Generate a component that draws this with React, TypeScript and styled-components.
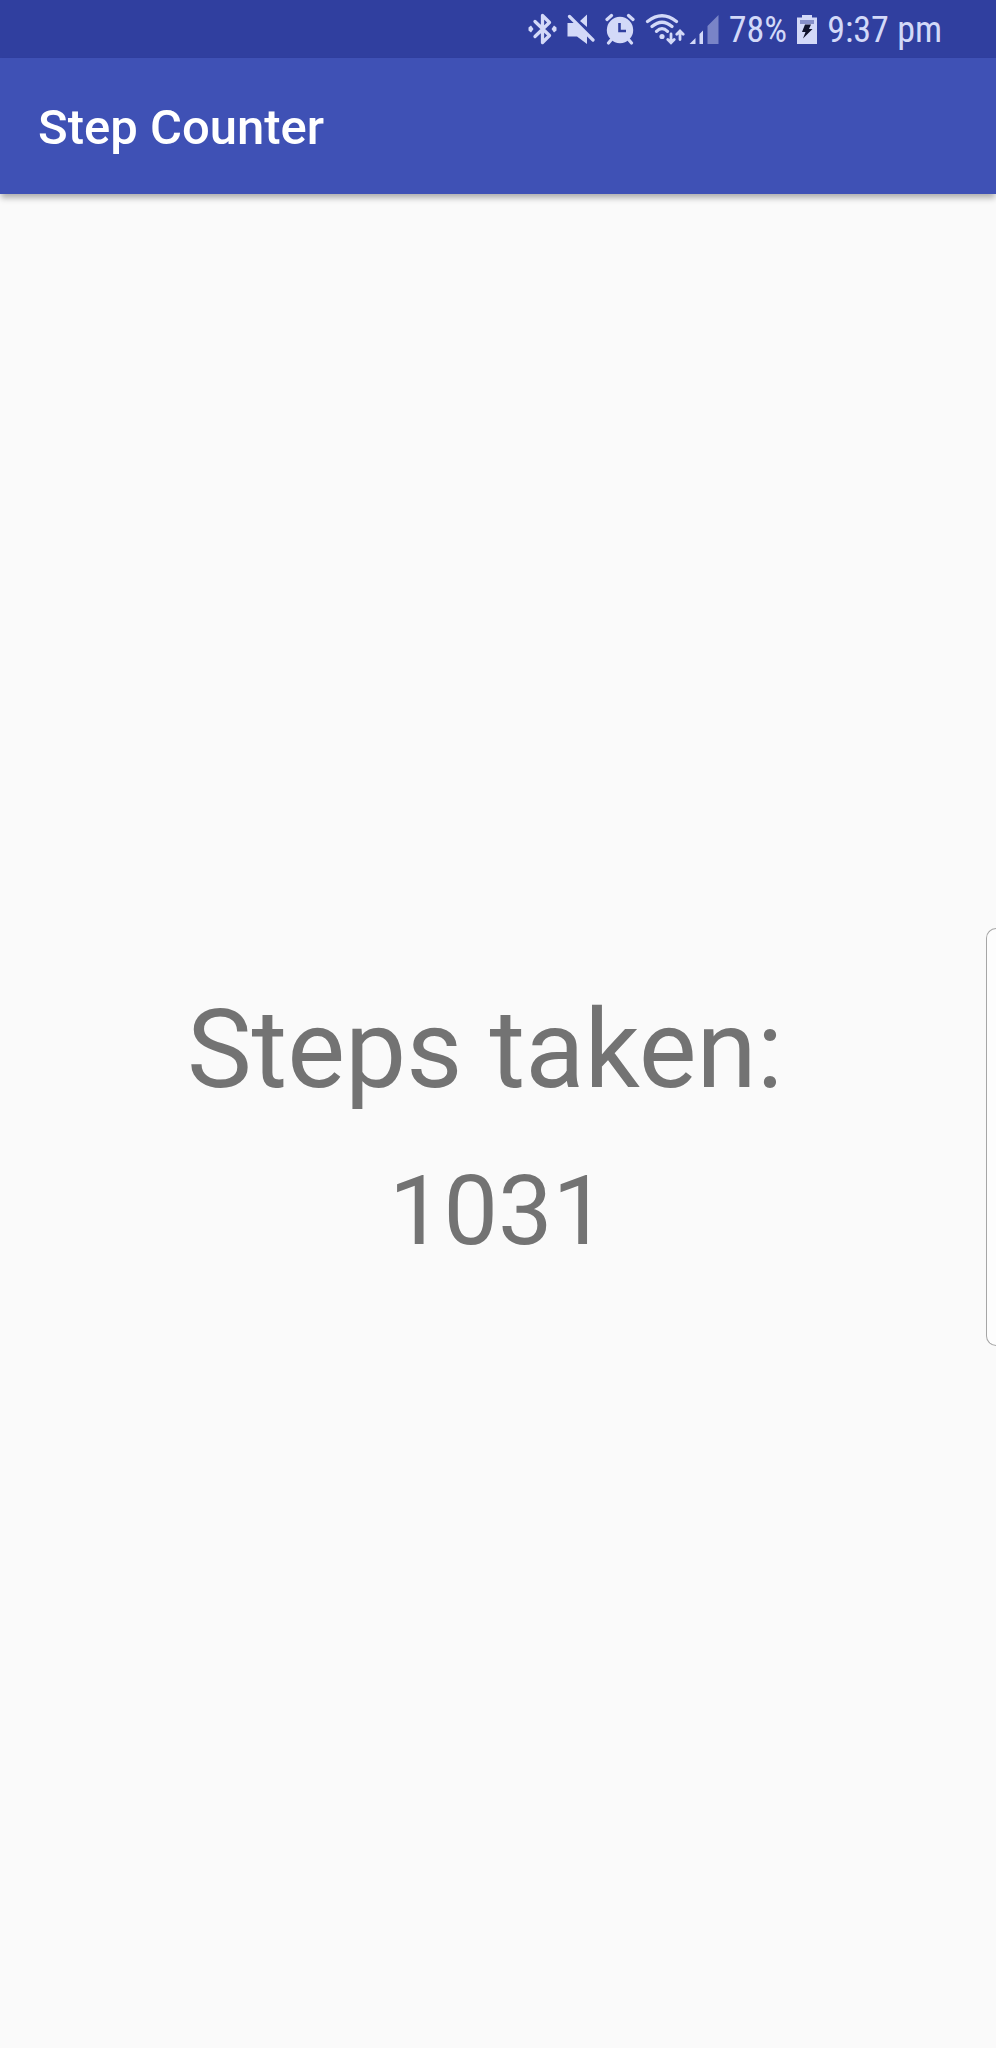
import React from "react";
import styled, { createGlobalStyle } from "styled-components";

const GlobalStyle = createGlobalStyle`
  *, *::before, *::after { box-sizing: border-box; }
  body { margin: 0; background: #fafafa; font-family: Roboto, sans-serif; }
`;

const Screen = styled.div`
  min-height: 100vh;
  display: flex;
  flex-direction: column;
`;

const StatusBar = styled.div`
  display: flex;
  align-items: center;
  justify-content: flex-end;
  gap: 10px;
  height: 58px;
  padding-right: 54px;
  background: #303f9f;
  color: #d3d9f8;
`;

const NetworkIcons = styled.div`
  display: flex;
  gap: 4px;
`;

const StatusIcon = styled.svg`
  display: block;
  flex: none;
  height: 32px;
  fill: currentColor;
`;

const StatusText = styled.span`
  padding-top: 2px;
  font-family: "Roboto Condensed", "Liberation Sans Narrow", Roboto, sans-serif;
  font-size: 36px;
  line-height: 44px;
  white-space: nowrap;
`;

const AppBar = styled.header`
  display: flex;
  align-items: center;
  height: 136px;
  padding: 4px 38px 0;
  background: #3f51b5;
  box-shadow: 0 5px 6px -1px rgba(0, 0, 0, 0.3);
`;

const Title = styled.h1`
  margin: 0;
  color: #fff;
  font-size: 49px;
  font-weight: 500;
  line-height: 56px;
`;

const Main = styled.main`
  position: relative;
  flex: 1;
  display: flex;
  flex-direction: column;
  align-items: center;
  justify-content: center;
  gap: 40px;
  padding-top: 12px;
  color: #737373;
`;

const Label = styled.p`
  margin: 0;
  padding-right: 26px;
  font-size: 109px;
  line-height: 128px;
`;

const Count = styled.output`
  font-size: 97px;
  line-height: 114px;
`;

const EdgeHandle = styled.div`
  position: absolute;
  top: 50%;
  right: 0;
  width: 10px;
  height: 418px;
  margin-top: -193px;
  border: 1px solid #a6a6a6;
  border-right: 0;
  border-radius: 12px 0 0 12px;
  background: #fdfdfd;
`;

const BluetoothIcon = () => (
  <StatusIcon width="29" viewBox="0 0 29 32" aria-label="Bluetooth">
    <path
      d="M7 8.500 21.500 22.500 14.500 29.500V2.500L21.500 9.500 7 23.500"
      fill="none"
      stroke="currentColor"
      strokeWidth="3.300"
      strokeLinejoin="round"
      strokeLinecap="round"
    />
    <path d="M0.500 14.500 3 12.500 5.500 16 3 19.500 0.500 17.500zM28.500 14.500 26 12.500 23.500 16 26 19.500 28.500 17.500z" />
  </StatusIcon>
);

const MuteIcon = () => (
  <StatusIcon width="28" viewBox="0 0 28 32" aria-label="Muted">
    <path d="M20 1.500V14L13 8zM0.500 10H8L20 22v9L10 23.500H0.500z" />
    <path d="M2.500 3.500 26 27" stroke="currentColor" strokeWidth="3.200" strokeLinecap="round" />
  </StatusIcon>
);

const AlarmIcon = () => (
  <StatusIcon width="30" viewBox="0 0 30 32" aria-label="Alarm">
    <circle cx="15" cy="17" r="13.200" />
    <path
      d="M2 6.500 6.500 2.500M28 6.500 23.500 2.500M6 27l-2.500 3M24 27l2.500 3"
      stroke="currentColor"
      strokeWidth="3.200"
      strokeLinecap="round"
    />
    <path d="M14.500 10v8H21" fill="none" stroke="#303f9f" strokeWidth="2.600" />
  </StatusIcon>
);

const WifiIcon = () => (
  <StatusIcon width="40" viewBox="0 0 40 32" aria-label="Wi-Fi">
    <g fill="none" stroke="currentColor" strokeWidth="3.200" strokeLinecap="round">
      <path d="M2.500 8.500Q17 -3 31.500 8.500M7 13.500Q17 5 27 13.500M11.500 18.300Q17 13 22.500 18.300" />
      <path
        d="M26 21v8M22.800 26.500 26 29.700l3.200-3.200M35 26.500v-7.500M31.800 21.200 35 18l3.200 3.200"
        strokeWidth="2.800"
      />
    </g>
    <circle cx="17" cy="23.500" r="2.600" />
  </StatusIcon>
);

const SignalIcon = () => (
  <StatusIcon width="30" viewBox="0 0 30 32" aria-label="Signal">
    <path d="M0.500 31 6.500 25v6zM10.500 21l3.500-3.500V31h-3.500z" />
    <path d="M18.500 13 29.500 2v29h-11z" opacity="0.450" />
  </StatusIcon>
);

const BatteryIcon = () => (
  <StatusIcon width="20" viewBox="0 0 20 32" aria-label="Charging">
    <path d="M5 2h10v2.500h5V31H0V4.500h5z" />
    <path d="M3 7h14v4H3z" fill="#8790c9" />
    <path d="M8 11.500h6L12 16h3.500L6 25.500 8.500 19H5z" fill="#10132c" />
  </StatusIcon>
);

export default function App() {
  return (
    <Screen>
      <GlobalStyle />
      <StatusBar>
        <BluetoothIcon />
        <MuteIcon />
        <AlarmIcon />
        <NetworkIcons>
          <WifiIcon />
          <SignalIcon />
        </NetworkIcons>
        <StatusText>78%</StatusText>
        <BatteryIcon />
        <StatusText>9:37 pm</StatusText>
      </StatusBar>
      <AppBar>
        <Title>Step Counter</Title>
      </AppBar>
      <Main>
        <Label id="steps-label">Steps taken:</Label>
        <Count aria-labelledby="steps-label">1031</Count>
        <EdgeHandle />
      </Main>
    </Screen>
  );
}
